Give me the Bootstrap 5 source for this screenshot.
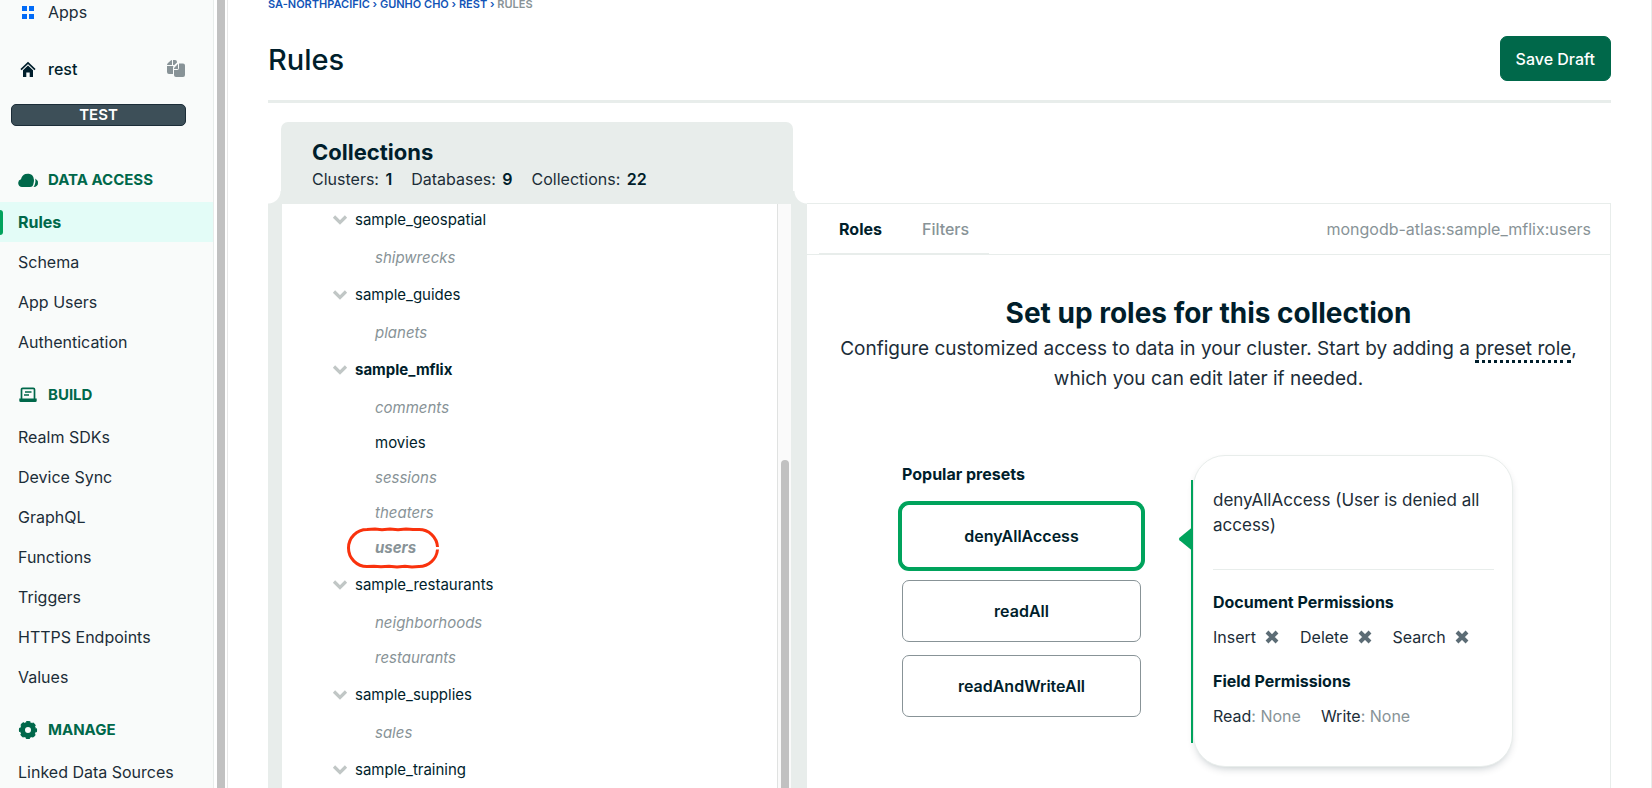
<!DOCTYPE html>
<html lang="en">
<head>
<meta charset="utf-8">
<meta name="viewport" content="width=device-width, initial-scale=1">
<title>Rules</title>
<link rel="stylesheet" href="https://cdn.jsdelivr.net/npm/bootstrap@5.3.0/dist/css/bootstrap.min.css">
<style>
:root { --ink:#001e2b; --text:#1c2d38; --forest:#00684a; --green:#00a35c; --mist:#e8edeb; --slate:#889397; }
body { font-family: Inter, "Liberation Sans", sans-serif; font-size:16px; line-height:24px; color:var(--text); background:#fff; }
a { color:inherit; text-decoration:none; }
.ink { color:var(--ink); }
.slate { color:var(--slate); }
.fs-tree { font-size:15px; }

/* left navigation */
.side { flex:0 0 228px; }
.side-body { background:#f9fbfa; border-right:1px solid var(--mist); }
.side-scroll { flex:0 0 14px; border-right:1px solid #e8e8e8; background:#fff; padding:0 2px 0 3px; }
.scroll-thumb { background:#c1c1c1; }
.side-line { padding-left:18px; gap:10px; }
.side-line svg { flex:0 0 20px; }
.side-apps { height:24px; margin-bottom:33px; }
.side-app { padding-right:27px; margin-bottom:23px; font-weight:500; color:var(--ink); }
.env-tag { height:22px; line-height:20px; margin:0 27px 42px 11px; font-size:15px; font-weight:600; color:#fff; background:#3d4f58; border:1px solid #1c2d38; border-radius:5px; text-align:center; }
.side-head { margin:0 0 10px; font-size:15px; line-height:24px; font-weight:700; color:var(--forest); }
.side-list { margin-bottom:21px; }
.side-list .nav-link { height:40px; line-height:40px; padding:0 0 0 18px; color:var(--text); }
.side-list .nav-link.active { position:relative; background:#e3fcf7; color:var(--forest); font-weight:700; }
.side-list .nav-link.active::before { content:""; position:absolute; left:0; top:8px; bottom:7px; width:3px; background:var(--green); border-radius:0 5px 5px 0; }

/* page heading */
.page-main { padding:0 40px; border-right:1px solid var(--mist); }
.crumbs { font-size:11px; line-height:8px; font-weight:600; color:#1254b7; margin-bottom:28px; }
.page-head { border-bottom:3px solid var(--mist); padding-bottom:17px; margin-bottom:19px; }
.page-title { font-size:29px; line-height:47px; font-weight:500; margin:0; }
.btn-save { --bs-btn-color:#fff; --bs-btn-bg:#00684a; --bs-btn-border-color:#00684a; --bs-btn-hover-color:#fff; --bs-btn-hover-bg:#00563d; height:45px; padding:0 15px; border-radius:7px; font-size:16px; font-weight:500; }

/* collections and roles */
.split { display:grid; grid-template-columns:minmax(0,539fr) minmax(0,804fr); grid-template-rows:auto minmax(0,1fr); }
.wing { flex:0 0 13px; background:radial-gradient(circle at 0 0, transparent 12px, var(--mist) 13px) left bottom / 13px 13px no-repeat; }
.wing-right { flex-basis:14px; background:radial-gradient(circle at 100% 0, transparent 12px, var(--mist) 13px) left bottom / 14px 13px no-repeat; }
.coll-head { background:var(--mist); border-radius:7px 7px 0 0; padding:17px 31px 11px; height:82px; }
.coll-title { font-size:22px; line-height:27px; font-weight:700; margin:0; }
.coll-stats { gap:19px; line-height:27px; }
.coll-stats b { font-weight:600; color:var(--ink); margin-left:2px; }
.coll-body { background:var(--mist); padding:0 16px 0 14px; }
.tree { background:#fff; padding-left:50px; }
.tree-list { margin-top:-4px; }
.tree-scroll { flex:0 0 14px; background:#fafafa; border-left:1px solid #e0e2e1; padding:256px 2px 0 3px; }
.tree-scroll .scroll-thumb { border-radius:4px 4px 0 0; }
.db-row { height:40px; gap:7px; color:var(--ink); }
.coll-row { height:35px; padding-left:43px; color:var(--slate); font-style:italic; }
.coll-row a { position:relative; }
.coll-row.has-rules { color:var(--ink); font-style:normal; }
.coll-ring { position:absolute; left:-29px; top:-9px; width:94px; height:42px; }

.roles { border-top:1px solid var(--mist); border-right:1px solid var(--mist); margin-top:-1px; }
.roles-head { height:51px; border-bottom:1px solid var(--mist); padding:0 19px 0 12px; }
.role-tabs { border-bottom:1px solid var(--mist); height:50px; }
.role-tabs .nav-link { padding:0 20px; line-height:50px; font-weight:500; color:var(--slate); }
.role-tabs .nav-link.active { color:var(--ink); font-weight:700; }
.intro { padding:40px 30px 61px; text-align:center; }
.intro h2 { font-size:28px; line-height:36px; font-weight:700; margin:0 0 3px; color:var(--ink); }
.intro p { font-size:19px; line-height:30px; margin:0; }
.term { border-bottom:3px dotted var(--ink); }
.presets { gap:52px; padding-right:2px; }
.preset-list { flex:0 0 239px; padding-top:7px; }
.preset-stack { row-gap:13px; }
.preset-list h3, .perm-title { font-size:16px; line-height:24px; font-weight:700; color:var(--ink); }
.preset-list h3 { margin:0 0 19px; }
.btn-preset { --bs-btn-color:#001e2b; --bs-btn-bg:#fff; --bs-btn-border-color:#889397; --bs-btn-hover-bg:#f9fbfa; --bs-btn-hover-color:#001e2b; --bs-btn-active-bg:#fff; --bs-btn-active-color:#001e2b; --bs-btn-active-border-color:#fff; height:62px; border-radius:7px; font-size:16px; font-weight:600; }
.btn-preset.active { box-shadow:0 0 0 4px var(--green); }
.detail { position:relative; flex:0 0 320px; height:312px; padding:32px 18px 20px 19px; border:1px solid var(--mist); border-radius:32px; background:#fff; box-shadow:0 4px 10px -4px rgba(0,30,43,.3); }
.detail::before { content:""; position:absolute; left:-3px; top:24px; bottom:23px; width:2px; background:var(--green); }
.detail-arrow { position:absolute; left:-16px; top:71px; }
.detail-text { font-size:17px; line-height:25px; margin:0; padding-bottom:31px; border-bottom:1px solid var(--mist); }
.perm-title { margin:20px 0 11px; }
.perm-row { gap:20px; }
</style>
</head>
<body>
<div class="d-flex vh-100 overflow-hidden">
  <aside class="side d-flex">
    <div class="side-body flex-grow-1">
      <a href="#" class="side-line side-apps d-flex align-items-center">
        <svg width="20" height="16" viewBox="0 0 20 16" fill="#016bf8"><path d="M4 2h5v5H4zM11 2h5v5h-5zM4 10h5v5H4zM11 10h5v5h-5z"/></svg>Apps</a>
      <div class="side-line side-app d-flex align-items-center">
        <svg width="20" height="20" viewBox="0 0 20 20"><path d="M3 10.600L10 4l7 6.600" fill="none" stroke="#001e2b" stroke-width="1.700"/><path d="M10 6.500l5 4.700V18h-3.300v-4.500H8.300V18H5v-6.800z" fill="#001e2b"/></svg>
        <a href="#">rest</a>
        <svg class="ms-auto" width="20" height="20" viewBox="0 0 20 20" fill="#889397"><path d="M6 1v5H1q0-1.200 1-2l2.500-2.300Q5.200 1 6 1zM7 1h2q2 0 2 2v.5L8.300 6H7zM1 7h6.500Q7 7.500 7 9v6H3q-2 0-2-2zM12 5v5H8q0-1 .7-1.700L11 6q.5-.8 1-1zM13 4.500h4q2 0 2 2V16q0 2-2 2h-7q-2 0-2-2v-5h3q2 0 2-2z"/></svg>
      </div>
      <div class="env-tag">TEST</div>

      <h2 class="side-head side-line d-flex align-items-center">
        <svg width="20" height="16" viewBox="0 0 20 16" fill="#00684a"><path d="M4 15a4 4 0 0 1-1-7.800A7 7 0 0 1 14 3q3 3 1.500 8.500Q15 15 12 15z"/><path d="M17.300 6.500q2.700 1.800 2.700 4.500 0 3.700-4.500 4 2.500-3 1.800-8.500z"/></svg>DATA ACCESS</h2>
      <nav class="side-list nav flex-column">
        <a class="nav-link active" href="#">Rules</a>
        <a class="nav-link" href="#">Schema</a>
        <a class="nav-link" href="#">App Users</a>
        <a class="nav-link" href="#">Authentication</a>
      </nav>
      <h2 class="side-head side-line d-flex align-items-center">
        <svg width="20" height="18" viewBox="0 0 20 18"><path d="M3.500 13V3.500q0-1.200 1.200-1.200h10.600q1.200 0 1.200 1.200V13" fill="none" stroke="#00684a" stroke-width="1.700"/><path d="M1.300 12.500h17.400v2.200q0 1.300-1.300 1.300H2.600q-1.300 0-1.300-1.300z" fill="#00684a"/><path d="M7 6h6.500M6 9h5" stroke="#00684a" stroke-width="1.400"/></svg>BUILD</h2>
      <nav class="side-list nav flex-column">
        <a class="nav-link" href="#">Realm SDKs</a>
        <a class="nav-link" href="#">Device Sync</a>
        <a class="nav-link" href="#">GraphQL</a>
        <a class="nav-link" href="#">Functions</a>
        <a class="nav-link" href="#">Triggers</a>
        <a class="nav-link" href="#">HTTPS Endpoints</a>
        <a class="nav-link" href="#">Values</a>
      </nav>
      <h2 class="side-head side-line d-flex align-items-center">
        <svg width="20" height="20" viewBox="0 0 20 20"><circle cx="10" cy="10" r="5.500" fill="none" stroke="#00684a" stroke-width="5"/><circle cx="10" cy="10" r="7.800" fill="none" stroke="#00684a" stroke-width="2.600" stroke-dasharray="3.800 2.326" stroke-dashoffset="1.900"/></svg>MANAGE</h2>
      <nav class="side-list nav flex-column">
        <a class="nav-link" href="#">Linked Data Sources</a>
      </nav>
    </div>
    <div class="side-scroll"><div class="scroll-thumb h-100"></div></div>
  </aside>

  <main class="page-main flex-grow-1 d-flex flex-column overflow-hidden">
    <nav class="crumbs" aria-label="Breadcrumb"><a href="#">SA-NORTHPACIFIC</a> › <a href="#">GUNHO CHO</a> › <a href="#">REST</a> › <span class="slate">RULES</span></nav>
    <header class="page-head d-flex justify-content-between align-items-start">
      <h1 class="page-title ink">Rules</h1>
      <button type="button" class="btn btn-save">Save Draft</button>
    </header>

    <div class="split flex-grow-1">
      <div class="d-flex">
        <div class="wing"></div>
        <div class="coll-head flex-grow-1">
          <h2 class="coll-title ink">Collections</h2>
          <div class="coll-stats d-flex">
            <span>Clusters: <b>1</b></span><span>Databases: <b>9</b></span><span>Collections: <b>22</b></span>
          </div>
        </div>
        <div class="wing wing-right"></div>
      </div>
      <div></div>

      <section class="coll-body d-flex overflow-hidden">
        <div class="tree flex-grow-1 overflow-hidden fs-tree">
          <ul class="tree-list list-unstyled">
            <li class="db-row d-flex align-items-center"><svg width="16" height="12" viewBox="0 0 16 12"><path d="M2 2.500l6 6 6-6" fill="none" stroke="#c1c7c6" stroke-width="3.200"/></svg><a href="#">sample_geospatial</a></li>
            <li class="coll-row d-flex align-items-center"><a href="#">shipwrecks</a></li>
            <li class="db-row d-flex align-items-center"><svg width="16" height="12" viewBox="0 0 16 12"><path d="M2 2.500l6 6 6-6" fill="none" stroke="#c1c7c6" stroke-width="3.200"/></svg><a href="#">sample_guides</a></li>
            <li class="coll-row d-flex align-items-center"><a href="#">planets</a></li>
            <li class="db-row d-flex align-items-center"><svg width="16" height="12" viewBox="0 0 16 12"><path d="M2 2.500l6 6 6-6" fill="none" stroke="#c1c7c6" stroke-width="3.200"/></svg><a href="#" class="fw-bold">sample_mflix</a></li>
            <li class="coll-row d-flex align-items-center"><a href="#">comments</a></li>
            <li class="coll-row has-rules d-flex align-items-center"><a href="#">movies</a></li>
            <li class="coll-row d-flex align-items-center"><a href="#">sessions</a></li>
            <li class="coll-row d-flex align-items-center"><a href="#">theaters</a></li>
            <li class="coll-row d-flex align-items-center"><a href="#" class="fw-bold">users<svg class="coll-ring" viewBox="0 0 94 42" fill="none" stroke="#f9320d" stroke-width="3"><path d="M91.500 22.500A18.500 18.500 0 0 1 73 39.500L66 40l-7-.8-8 .8-8-.8-8 .6-7-.6-7 .3A18.500 18.500 0 0 1 21 2.500l8-.6 7 .8 8-.8 8 .8 8-.8 7 .7 6-.1A18.500 18.500 0 0 1 91.500 20"/></svg></a></li>
            <li class="db-row d-flex align-items-center"><svg width="16" height="12" viewBox="0 0 16 12"><path d="M2 2.500l6 6 6-6" fill="none" stroke="#c1c7c6" stroke-width="3.200"/></svg><a href="#">sample_restaurants</a></li>
            <li class="coll-row d-flex align-items-center"><a href="#">neighborhoods</a></li>
            <li class="coll-row d-flex align-items-center"><a href="#">restaurants</a></li>
            <li class="db-row d-flex align-items-center"><svg width="16" height="12" viewBox="0 0 16 12"><path d="M2 2.500l6 6 6-6" fill="none" stroke="#c1c7c6" stroke-width="3.200"/></svg><a href="#">sample_supplies</a></li>
            <li class="coll-row d-flex align-items-center"><a href="#">sales</a></li>
            <li class="db-row d-flex align-items-center"><svg width="16" height="12" viewBox="0 0 16 12"><path d="M2 2.500l6 6 6-6" fill="none" stroke="#c1c7c6" stroke-width="3.200"/></svg><a href="#">sample_training</a></li>
          </ul>
        </div>
        <div class="tree-scroll"><div class="scroll-thumb h-100"></div></div>
      </section>

      <section class="roles">
        <div class="roles-head d-flex justify-content-between">
          <nav class="role-tabs nav">
            <a class="nav-link active" href="#">Roles</a>
            <a class="nav-link" href="#">Filters</a>
          </nav>
          <span class="slate align-self-center">mongodb-atlas:sample_mflix:users</span>
        </div>
        <div class="intro">
          <h2>Set up roles for this collection</h2>
          <p>Configure customized access to data in your cluster. Start by adding a <span class="term">preset role</span>,<br>which you can edit later if needed.</p>
        </div>
        <div class="presets d-flex justify-content-center">
          <div class="preset-list">
            <h3>Popular presets</h3>
            <div class="preset-stack d-grid">
              <button type="button" class="btn btn-preset active">denyAllAccess</button>
              <button type="button" class="btn btn-preset">readAll</button>
              <button type="button" class="btn btn-preset">readAndWriteAll</button>
            </div>
          </div>
          <div class="detail">
            <svg class="detail-arrow" width="14" height="24" viewBox="0 0 14 24" fill="#00a35c"><path d="M14 .5v23L1.500 13.200q-1.300-1.200 0-2.400z"/></svg>
            <p class="detail-text">denyAllAccess (User is denied all access)</p>
            <h3 class="perm-title">Document Permissions</h3>
            <div class="perm-row d-flex">
              <span class="d-flex align-items-center gap-2">Insert <svg width="16" height="16" viewBox="0 0 16 16"><path d="M3 3l10 10M13 3L3 13" stroke="#5c6c75" stroke-width="4"/></svg></span>
              <span class="d-flex align-items-center gap-2">Delete <svg width="16" height="16" viewBox="0 0 16 16"><path d="M3 3l10 10M13 3L3 13" stroke="#5c6c75" stroke-width="4"/></svg></span>
              <span class="d-flex align-items-center gap-2">Search <svg width="16" height="16" viewBox="0 0 16 16"><path d="M3 3l10 10M13 3L3 13" stroke="#5c6c75" stroke-width="4"/></svg></span>
            </div>
            <h3 class="perm-title">Field Permissions</h3>
            <div class="perm-row d-flex">
              <span>Read<span class="slate">: None</span></span>
              <span>Write<span class="slate">: None</span></span>
            </div>
          </div>
        </div>
      </section>
    </div>
  </main>
</div>
<script src="https://cdn.jsdelivr.net/npm/bootstrap@5.3.0/dist/js/bootstrap.bundle.min.js"></script>
</body>
</html>
